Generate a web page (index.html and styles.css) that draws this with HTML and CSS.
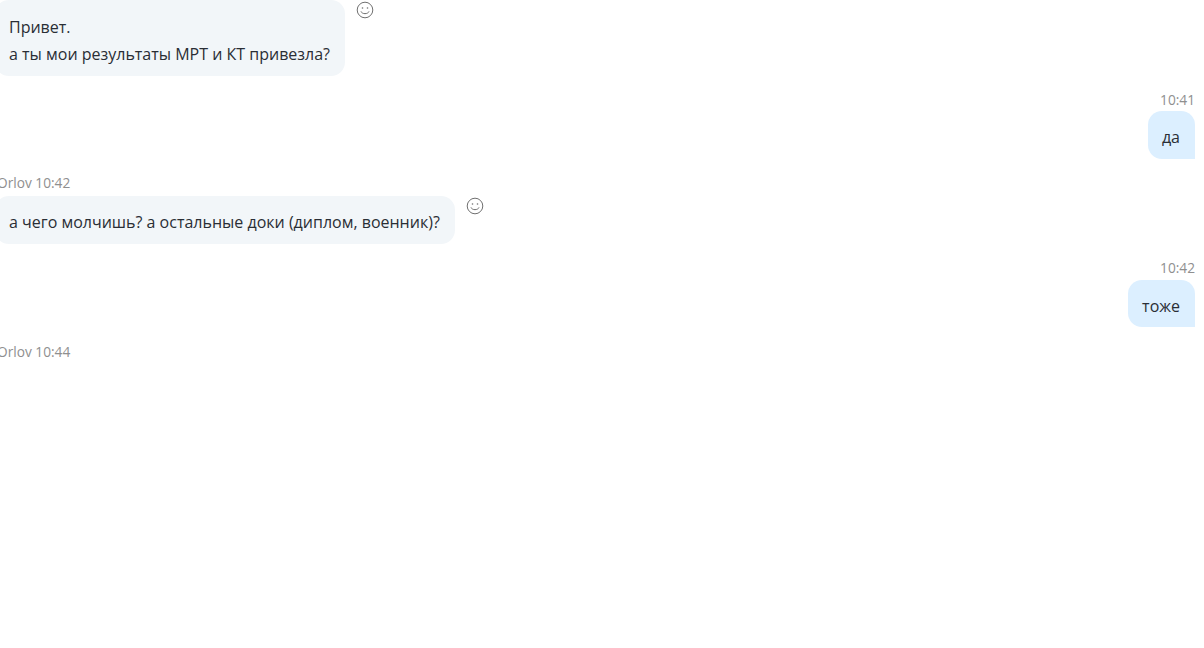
FILE: index.html
```html
<!DOCTYPE html>
<html lang="ru">
<head>
<meta charset="utf-8">
<title>Чат</title>
<link rel="stylesheet" href="styles.css">
</head>
<body>
<main class="chat">
  <div class="msg in first">
    <div class="bubble-row">
      <div class="bubble">Привет.<br>а ты мои результаты МРТ и КТ привезла?</div>
      <svg class="react" viewBox="0 0 18 18"><circle cx="9" cy="9" r="7.8"/><circle class="eye" cx="6.5" cy="7" r=".8"/><circle class="eye" cx="11.5" cy="7" r=".8"/><path d="M5 10.4c1 3 7 3 8 0"/></svg>
    </div>
  </div>
  <div class="msg out">
    <div class="meta">10:41</div>
    <div class="bubble">да</div>
  </div>
  <div class="msg in">
    <div class="meta">Orlov 10:42</div>
    <div class="bubble-row">
      <div class="bubble">а чего молчишь? а остальные доки (диплом, военник)?</div>
      <svg class="react" viewBox="0 0 18 18"><circle cx="9" cy="9" r="7.8"/><circle class="eye" cx="6.5" cy="7" r=".8"/><circle class="eye" cx="11.5" cy="7" r=".8"/><path d="M5 10.4c1 3 7 3 8 0"/></svg>
    </div>
  </div>
  <div class="msg out">
    <div class="meta">10:42</div>
    <div class="bubble">тоже</div>
  </div>
  <div class="msg in">
    <div class="meta">Orlov 10:44</div>
  </div>
</main>
</body>
</html>
```
FILE: styles.css
```css
html, body {
  margin: 0;
  height: 100%;
  background: #fff;
  overflow: hidden;
}
.chat {
  display: flex;
  flex-direction: column;
  margin: 0 9px 0 -5px;
  font-family: "Open Sans", "Noto Sans", sans-serif;
  font-size: 16px;
  line-height: 27px;
  color: #2a2e35;
}
.msg { display: flex; flex-direction: column; margin-top: 14.5px; }
.msg.first { margin: 0 0 -1px; }
.msg.in { align-items: flex-start; }
.msg.out { align-items: flex-end; }
.meta {
  font-size: 13.7px;
  line-height: 20px;
  margin: 0 0 3px 2px;
  color: #8f8f8f;
}
.out .meta { margin-bottom: 1.5px; }
.bubble-row { display: flex; align-items: flex-start; }
.bubble {
  padding: 13px 15px 7.5px 14px;
  background: #f2f6f9;
  border-radius: 14px;
  white-space: nowrap;
}
.first .bubble { padding: 14px 15px 8px 14px; }
.out .bubble {
  background: #dcefff;
  border-bottom-right-radius: 0;
}
.react {
  width: 18px;
  height: 18px;
  margin: 1px 0 0 11px;
  fill: none;
  stroke: #707070;
  stroke-width: 1;
}
.react .eye { fill: #707070; stroke: none; }
```
